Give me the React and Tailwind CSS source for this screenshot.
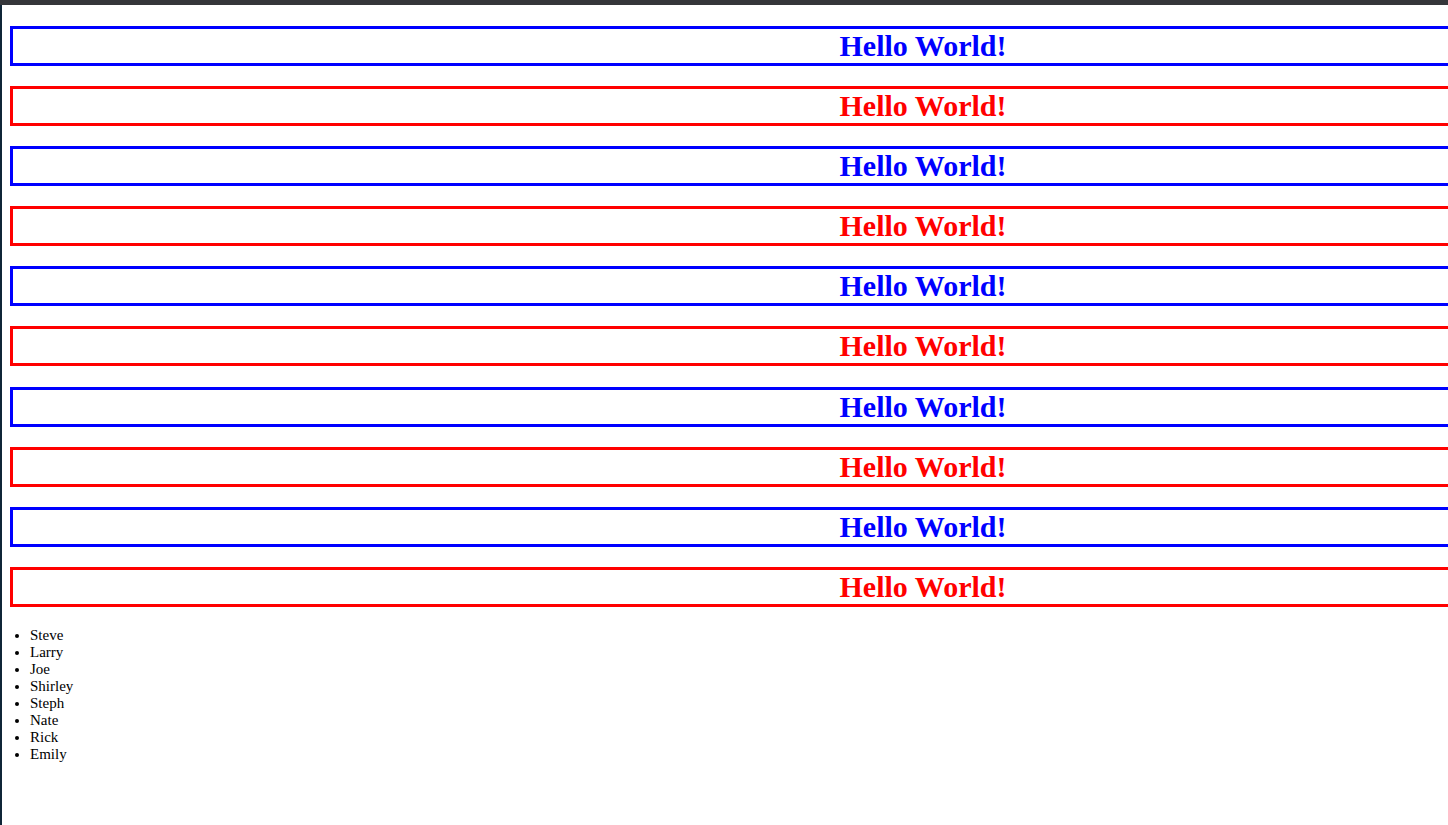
export default function App() {
  const names = ["Steve", "Larry", "Joe", "Shirley", "Steph", "Nate", "Rick", "Emily"];
  const boxes = [0, 1, 2, 3, 4, 5, 6, 7, 8, 9];

  return (
    <div
      className="h-screen w-full overflow-hidden bg-white flex flex-col"
      style={{ fontFamily: "'Liberation Serif', 'Times New Roman', serif" }}
    >
      {/* top bar */}
      <div className="h-[5px] bg-[#35363a] shrink-0" />
      <div className="flex flex-1 min-h-0">
        {/* left strip */}
        <div className="w-[2px] bg-[#0f2537] shrink-0" />
        <div className="flex-1 min-w-0 overflow-hidden pl-2 pt-[21px]">
          {boxes.map((i) => (
            <div
              key={i}
              className={`w-[1826px] h-[40px] border-[3px] mb-[20.1px] text-center text-[30px] font-bold leading-[34px] ${
                i % 2 === 0 ? "border-[#0000ff] text-[#0000ff]" : "border-[#ff0000] text-[#ff0000]"
              }`}
            >
              Hello World!
            </div>
          ))}
          <ul className="list-disc pl-5 text-[15px] leading-[17px] text-black">
            {names.map((n) => (
              <li key={n}>{n}</li>
            ))}
          </ul>
        </div>
      </div>
    </div>
  );
}
